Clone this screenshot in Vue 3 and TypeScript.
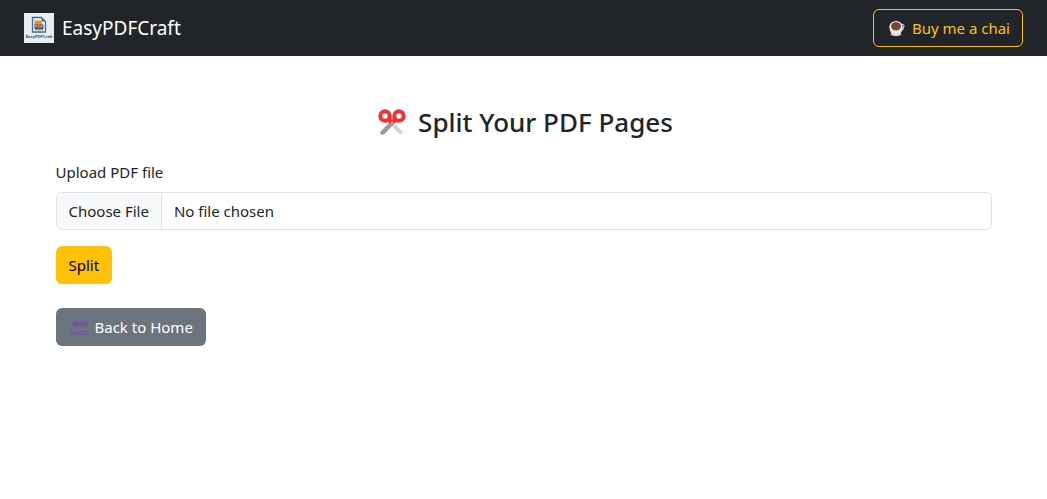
<script setup lang="ts">
import { ref } from 'vue'

const brand = 'EasyPDFCraft'
const selected = ref<File | null>(null)

function onFileChange(event: Event): void {
  const input = event.target as HTMLInputElement
  selected.value = input.files?.[0] ?? null
}
</script>

<template>
  <nav class="navbar">
    <a class="brand" href="#">
      <svg class="brand-logo" viewBox="0 0 30 30" aria-hidden="true">
        <rect width="30" height="30" fill="#e9edf2" />
        <path d="M8.500 4.500h9l4 4v10.500h-13z" fill="#eef3f8" stroke="#3f6da3" stroke-width="1.300" stroke-linejoin="round" />
        <path d="M17.500 4.500v4h4z" fill="#3f6da3" />
        <rect x="10.500" y="7.500" width="7.500" height="4.500" fill="#f58f22" />
        <rect x="10.500" y="11.500" width="9" height="4.500" fill="#2b5580" />
        <rect x="11" y="16" width="8" height="1.500" fill="#f58f22" />
        <text x="15" y="15.200" text-anchor="middle" font-size="4" font-weight="700" fill="#f3b36c">PDF</text>
        <text x="15" y="25" text-anchor="middle" font-size="4" font-weight="700" fill="#3c4656">EasyPDFCraft</text>
      </svg>
      <span>{{ brand }}</span>
    </a>
    <a class="btn btn-outline" href="#">
      <svg class="emoji" viewBox="0 0 22 22" aria-hidden="true">
        <path d="M14.500 8c4.500-2.500 4.500 3 .5 6" fill="none" stroke="#c9c9cd" stroke-width="1.200" />
        <ellipse cx="10" cy="17.200" rx="5.500" ry="2" fill="#b8b8be" />
        <path d="M3.500 9.500c0 5.500 2.500 9 6.500 9s6.500-3.500 6.500-9z" fill="#e6e6ea" />
        <ellipse cx="10" cy="9.300" rx="6.500" ry="5.200" fill="#f4f4f6" />
        <ellipse cx="10" cy="9.300" rx="5" ry="4.200" fill="#7d4533" />
      </svg>
      <span>Buy me a chai</span>
    </a>
  </nav>

  <main class="container">
    <h1 class="title">
      <svg class="title-icon" viewBox="0 0 36 30" aria-hidden="true">
        <path d="M18.500 14.500l10.500 10.500c-.8 2.500-2.800 2.800-4.500 1L16 17z" fill="#d3d3d3" />
        <path d="M17 14L6 25c.3 3 3 3.500 4.500 2L20 17z" fill="#9b9b9b" />
        <path d="M12 14.200l4.500 2.600 1.500-1.400 1.500 1.400 4.500-2.600V8h-3l-3 5-3-5h-3z" fill="#f8312f" />
        <circle cx="11" cy="9" r="4.700" fill="#fff" stroke="#f8312f" stroke-width="4" />
        <circle cx="25" cy="9" r="4.700" fill="#fff" stroke="#f8312f" stroke-width="4" />
        <circle cx="18" cy="15.500" r=".9" fill="#d3d3d3" />
      </svg>
      <span>Split Your PDF Pages</span>
    </h1>

    <form class="form" @submit.prevent>
      <label class="label" for="pdf">Upload PDF file</label>
      <input id="pdf" class="file" type="file" accept=".pdf" @change="onFileChange" />
      <button class="btn btn-split" type="submit">Split</button>
    </form>

    <a class="btn btn-back" href="#">
      <svg class="emoji" viewBox="0 0 22 22" aria-hidden="true">
        <path d="M3 8L7.500 4.500v2h10.500v3H7.500v2z" fill="#6b57a5" stroke="#6b57a5" stroke-linejoin="round" />
        <text x="10.500" y="19" text-anchor="middle" font-size="6" font-weight="700" fill="#6b57a5" stroke="#6b57a5" stroke-width=".3">BACK</text>
      </svg>
      <span>Back to Home</span>
    </a>
  </main>
</template>

<style>
body {
  margin: 0;
  background: #fff;
}

#app {
  font-family: "Segoe UI", "Noto Sans", "Open Sans", sans-serif;
  font-size: 15px;
  line-height: 24px;
  color: #212529;
}
</style>

<style scoped>
.navbar {
  display: flex;
  align-items: center;
  justify-content: space-between;
  box-sizing: border-box;
  min-height: 56px;
  padding: 8px 24px;
  background: #212529;
}

.brand {
  display: flex;
  align-items: center;
  gap: 8px;
  color: #fff;
  font-size: 19px;
  line-height: 30px;
  text-decoration: none;
}

.brand-logo {
  width: 30px;
  height: 30px;
  font-family: "Liberation Sans", sans-serif;
}

.btn {
  display: inline-flex;
  align-items: center;
  gap: 4px;
  padding: 6px 12px;
  border: 1px solid transparent;
  border-radius: 6px;
  font: inherit;
  text-decoration: none;
  cursor: pointer;
}

.emoji {
  width: 22px;
  height: 22px;
  font-family: "Liberation Sans", sans-serif;
}

.btn-outline {
  border-color: #ffc107;
  color: #ffc107;
}

.btn-split {
  background: #ffc107;
  color: #000;
}

.btn-back {
  margin-top: 24px;
  background: #6c757d;
  color: #fff;
}

.container {
  box-sizing: border-box;
  max-width: 960px;
  margin: 0 auto;
  padding: 48px 12px;
}

.title {
  display: flex;
  align-items: center;
  justify-content: center;
  gap: 8px;
  margin: 0 0 20px;
  font-size: 26px;
  font-weight: 500;
  line-height: 36px;
}

.title-icon {
  width: 36px;
  height: 30px;
}

.form {
  display: flex;
  flex-direction: column;
  align-items: flex-start;
}

.label {
  margin-bottom: 8px;
}

.file {
  box-sizing: border-box;
  width: 100%;
  margin-bottom: 16px;
  padding: 6px 12px;
  border: 1px solid #dee2e6;
  border-radius: 6px;
  overflow: hidden;
  background: #fff;
  color: #212529;
  font: inherit;
}

.file::file-selector-button {
  margin: -6px 12px -6px -12px;
  padding: 6px 12px;
  border: 0 solid #dee2e6;
  border-right-width: 1px;
  border-radius: 0;
  background: #f8f9fa;
  color: #212529;
  font: inherit;
}
</style>
